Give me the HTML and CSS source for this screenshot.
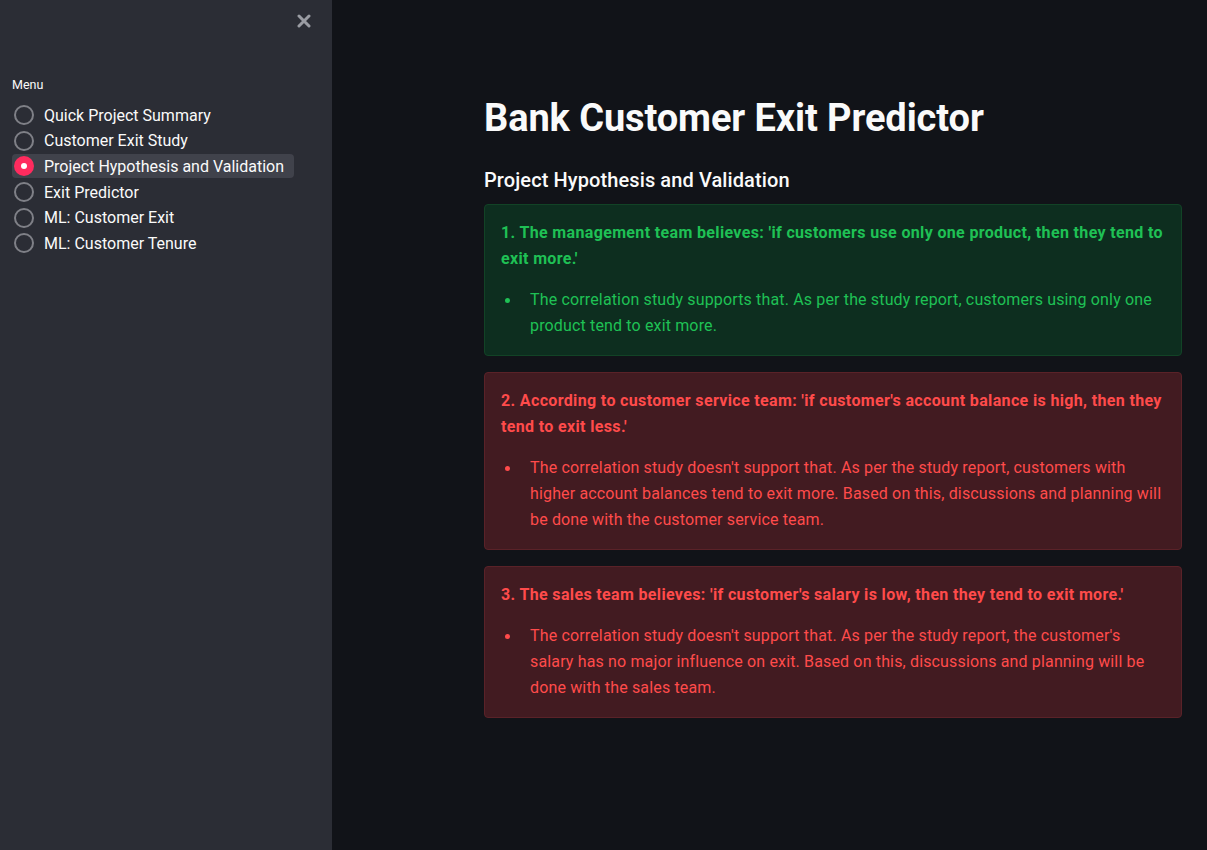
FILE: index.html
```html
<!DOCTYPE html>
<html>
<head>
<meta charset="utf-8">
<link rel="stylesheet" href="styles.css">
</head>
<body>
<div class="app">
  <aside class="sidebar">
    <div class="sidebar-top">
      <button class="close" aria-label="Close">
        <svg width="14" height="14" viewBox="0 0 14 14"><path d="M2 2 L12 12 M12 2 L2 12" stroke="#9a9ca3" stroke-width="3" stroke-linecap="round"/></svg>
      </button>
    </div>
    <div class="menu-label">Menu</div>
    <ul class="radio-list">
      <li class="radio"><span class="dot"></span><span>Quick Project Summary</span></li>
      <li class="radio"><span class="dot"></span><span>Customer Exit Study</span></li>
      <li class="radio selected"><span class="dot"></span><span>Project Hypothesis and Validation</span></li>
      <li class="radio"><span class="dot"></span><span>Exit Predictor</span></li>
      <li class="radio"><span class="dot"></span><span>ML: Customer Exit</span></li>
      <li class="radio"><span class="dot"></span><span>ML: Customer Tenure</span></li>
    </ul>
  </aside>
  <main class="main">
    <div class="content">
      <h1 class="title">Bank Customer Exit Predictor</h1>
      <h3 class="subtitle">Project Hypothesis and Validation</h3>
      <div class="alert success">
        <p class="lead">1. The management team believes: 'if customers use only one product, then they tend to exit more.'</p>
        <ul><li>The correlation study supports that. As per the study report, customers using only one product tend to exit more.</li></ul>
      </div>
      <div class="alert error">
        <p class="lead">2. According to customer service team: 'if customer's account balance is high, then they tend to exit less.'</p>
        <ul><li>The correlation study doesn't support that. As per the study report, customers with higher account balances tend to exit more. Based on this, discussions and planning will be done with the customer service team.</li></ul>
      </div>
      <div class="alert error">
        <p class="lead">3. The sales team believes: 'if customer's salary is low, then they tend to exit more.'</p>
        <ul><li>The correlation study doesn't support that. As per the study report, the customer's salary has no major influence on exit. Based on this, discussions and planning will be done with the sales team.</li></ul>
      </div>
    </div>
  </main>
</div>
</body>
</html>
```
FILE: styles.css
```css
* { box-sizing: border-box; }
html, body { margin: 0; padding: 0; height: 100%; }
body {
  font-family: Roboto, "Liberation Sans", sans-serif;
  background: #111318;
  color: #fafafa;
}
.app { display: flex; height: 850px; }
.sidebar {
  width: 332px;
  flex: none;
  background: #2b2d35;
  padding: 0 12px;
}
.sidebar-top { display: flex; justify-content: flex-end; padding-top: 12px; height: 77px; }
.close {
  background: none; border: 0; padding: 0; margin-right: 7px;
  width: 18px; height: 18px; display: flex; align-items: center; justify-content: center;
}
.menu-label { font-size: 12.5px; color: #fafafa; line-height: 16px; margin-bottom: 10px; }
.radio-list { list-style: none; margin: 0; padding: 0; }
.radio {
  display: flex; align-items: center; gap: 10px;
  height: 24px; margin-bottom: 1.7px; padding-left: 2px;
  font-size: 16px; color: #fafafa;
  width: 282px;
  border-radius: 4px;
}
.radio.selected { background: #40424b; }
.dot {
  width: 20px; height: 20px; border-radius: 50%;
  border: 2px solid #7f8087; flex: none;
}
.radio.selected .dot {
  border: 0; background: #ff2b5e; position: relative;
}
.radio.selected .dot::after {
  content: ""; position: absolute; left: 7px; top: 7px; width: 6px; height: 6px;
  border-radius: 50%; background: #fff;
}
.main { flex: 1; }
.content { width: 698px; margin-left: 152px; padding-top: 94px; }
.title {
  font-size: 38px; font-weight: 700; margin: 0; line-height: 48px; letter-spacing: -0.1px;
}
.subtitle { font-size: 20px; font-weight: 500; margin: 24px 0 0; line-height: 28px; letter-spacing: 0.1px; }
.alert {
  margin-top: 10px; border-radius: 4px; padding: 15px 16px 16px 16px;
  font-size: 16px; line-height: 26px; letter-spacing: 0.15px;
}
.alert + .alert { margin-top: 16px; }
.success { background: #0d2e1f; color: #1fc155; border: 1px solid #124326; }
.error { background: #421b21; color: #ff4b4b; border: 1px solid #5a2228; }
.lead { font-weight: 700; margin: 0 0 15px; letter-spacing: 0.35px; }
.alert ul { margin: 0; padding-left: 29px; list-style: none; }
.alert li { position: relative; }
.alert li::before {
  content: ""; position: absolute; left: -25px; top: 11px;
  width: 5px; height: 5px; border-radius: 50%; background: currentColor;
}
```
